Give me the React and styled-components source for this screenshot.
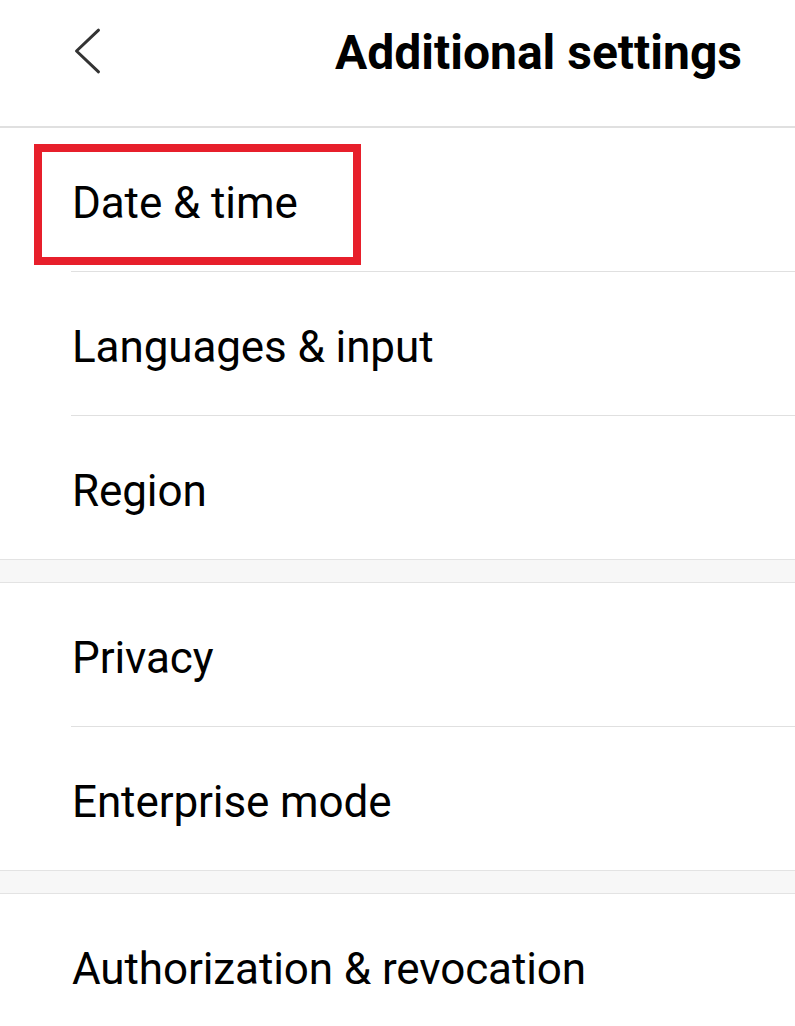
import styled, { createGlobalStyle } from 'styled-components';

const GlobalStyle = createGlobalStyle`
  html, body {
    margin: 0;
    padding: 0;
    background: #ffffff;
  }
  body {
    font-family: Roboto, "Noto Sans", "Liberation Sans", sans-serif;
    -webkit-font-smoothing: antialiased;
  }
`;

const groups = [
  [{ label: 'Date & time', marked: true }, { label: 'Languages & input' }, { label: 'Region' }],
  [{ label: 'Privacy' }, { label: 'Enterprise mode' }],
  [{ label: 'Authorization & revocation' }],
];

function BackIcon() {
  return (
    <svg width="34" height="50" viewBox="0 0 34 50" fill="none">
      <path
        d="M28.5 4.2 L6.5 25 L28.5 45.8"
        stroke="#333333"
        strokeWidth="3"
        strokeLinecap="round"
        strokeLinejoin="round"
      />
    </svg>
  );
}

function App() {
  return (
    <>
      <GlobalStyle />
      <Page>
        <Header>
          <BackButton aria-label="Back">
            <BackIcon />
          </BackButton>
          <Title>Additional settings</Title>
        </Header>

        {groups.map((items, gi) => (
          <Group key={gi}>
            {items.map((item, i) => (
              <Row key={item.label} $divider={i < items.length - 1}>
                <Label>{item.label}</Label>
                {item.marked && <Highlight />}
              </Row>
            ))}
            {gi < groups.length - 1 && <Gap />}
          </Group>
        ))}
      </Page>
    </>
  );
}

const Page = styled.div`
  width: 795px;
  height: 1026px;
  overflow: hidden;
  background: #ffffff;
  display: flex;
  flex-direction: column;
`;

const Header = styled.header`
  flex: none;
  height: 102px;
  padding: 0 53px 24px 70px;
  display: flex;
  align-items: center;
  justify-content: space-between;
  border-bottom: 2px solid #e0e0e0;
`;

const BackButton = styled.button`
  display: flex;
  align-items: center;
  padding: 0;
  border: none;
  background: none;
`;

const Title = styled.h1`
  margin: 4px 0 0;
  font-size: 48px;
  line-height: 48px;
  font-weight: 700;
  color: #000000;
  letter-spacing: 0;
`;

const Group = styled.section`
  display: flex;
  flex-direction: column;
  flex: none;
`;

const Row = styled.div`
  position: relative;
  height: 143px;
  flex: none;
  box-sizing: border-box;
  padding: 6px 0 0 72px;
  display: flex;
  align-items: center;
  margin-bottom: ${({ $divider }) => ($divider ? '1px' : '0')};

  &::after {
    content: '';
    display: ${({ $divider }) => ($divider ? 'block' : 'none')};
    position: absolute;
    left: 71px;
    right: 0;
    bottom: -1px;
    height: 1px;
    background: #e0e0e0;
  }
`;

const Label = styled.span`
  font-size: 44px;
  font-weight: 400;
  color: #000000;
  letter-spacing: -0.1px;
`;

const Highlight = styled.div`
  position: absolute;
  left: 34px;
  top: 16px;
  width: 327px;
  height: 121px;
  box-sizing: border-box;
  border: 8px solid #e71f2b;
  pointer-events: none;
`;

const Gap = styled.div`
  height: 22px;
  background: #f7f7f7;
  border-top: 1px solid #e3e3e3;
  border-bottom: 1px solid #e3e3e3;
`;

export default App;
